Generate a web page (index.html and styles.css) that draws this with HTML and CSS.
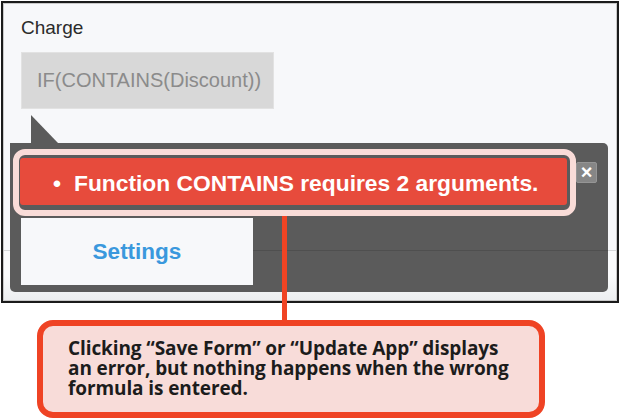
FILE: index.html
```html
<!DOCTYPE html>
<html>
<head>
<meta charset="utf-8">
<link rel="stylesheet" href="styles.css">
</head>
<body>
<div class="stage">
  <div class="frame">
    <div class="label">Charge</div>
    <div class="input">IF(CONTAINS(Discount))</div>
    <div class="tip">
      <div class="tip-arrow"></div>
      <div class="tip-panel">
        <div class="err-row">
          <div class="err-ring">
            <div class="err"><span class="bullet">•</span><span>Function CONTAINS requires 2 arguments.</span></div>
          </div>
          <div class="close">×</div>
        </div>
        <div class="settings">Settings</div>
      </div>
    </div>
  </div>
  <div class="connector"></div>
  <div class="callout">Clicking “Save Form” or “Update App” displays an error, but nothing happens when the wrong formula is entered.</div>
</div>
</body>
</html>
```

FILE: styles.css
```css
* { box-sizing: border-box; }
html, body { margin: 0; padding: 0; background: #ffffff; }
body { font-family: "Liberation Sans", Arial, sans-serif; }

.stage { position: relative; width: 620px; height: 419px; padding-top: 1px; }

.frame {
  margin-left: 1px;
  width: 618px;
  height: 302px;
  border: 2px solid #1b1b1b;
  background:
    linear-gradient(to bottom, transparent 247px, #d6d8da 247px, #d6d8da 248px, #fafbfc 248px, #fafbfc 272px, #eceef0 298px),
    #f7f8fa;
  box-shadow: inset 0 0 0 1px #c9c9c9;
  padding: 14px 0 0 18px;
  display: flex;
  flex-direction: column;
  align-items: flex-start;
}

.label {
  font-size: 19px;
  line-height: 22px;
  color: #2b2b2b;
}

.input {
  margin-top: 13px;
  width: 253px;
  height: 57px;
  background: #d8d8d8;
  border: 1px solid #e2e2e2;
  color: #8b8b8b;
  font-size: 20px;
  padding-left: 15px;
  display: flex;
  align-items: center;
}

.tip {
  margin-top: 6px;
  margin-left: -11px;
  display: flex;
  flex-direction: column;
  align-items: flex-start;
}

.tip-arrow {
  margin-left: 21px;
  width: 0;
  height: 0;
  border-top: 28px solid transparent;
  border-left: 27px solid #5b5b5b;
}

.tip-panel {
  position: relative;
  width: 598px;
  height: 149px;
  background: #5b5b5b;
  border-radius: 0 5px 5px 5px;
  padding: 6px 0 0 3px;
}
.tip-panel::after {
  content: "";
  position: absolute;
  left: 243px;
  right: 0;
  top: 107px;
  height: 1px;
  background: #4f4f4f;
}

.err-row { display: flex; align-items: flex-start; }

.err-ring {
  width: 563px;
  border: 6px solid #f9dcd8;
  border-radius: 12px;
  padding: 3px 3px 5px 1px;
}

.err {
  height: 47px;
  background: #e74b3c;
  border-radius: 3px;
  color: #ffffff;
  font-weight: 700;
  font-size: 22.8px;
  display: flex;
  align-items: center;
  padding: 3px 0 0 33px;
  white-space: nowrap;
}
.bullet { margin-right: 13px; }

.close {
  margin-top: 13px;
  width: 21px;
  height: 21px;
  background: #868686;
  border: 1px solid #959595;
  border-radius: 2px;
  color: #ffffff;
  font-weight: 700;
  font-size: 20px;
  line-height: 19px;
  text-align: center;
}

.settings {
  margin: 2px 0 0 8px;
  width: 232px;
  height: 67px;
  background: #f7f8fa;
  color: #3a98dd;
  font-weight: 700;
  font-size: 22.5px;
  display: flex;
  align-items: center;
  justify-content: center;
}

.connector {
  position: absolute;
  left: 282px;
  top: 216px;
  width: 5px;
  height: 106px;
  background: #f04424;
}

.callout {
  margin: 17px 0 0 37px;
  width: 508px;
  height: 98px;
  border: 6px solid #ef4324;
  border-radius: 16px;
  background: #f8dcd9;
  color: #1c1c1c;
  font-family: "Open Sans", "Liberation Sans", sans-serif;
  font-weight: 700;
  font-size: 19px;
  line-height: 20px;
  letter-spacing: -0.1px;
  padding: 12px 26px 0 25px;
}
```
